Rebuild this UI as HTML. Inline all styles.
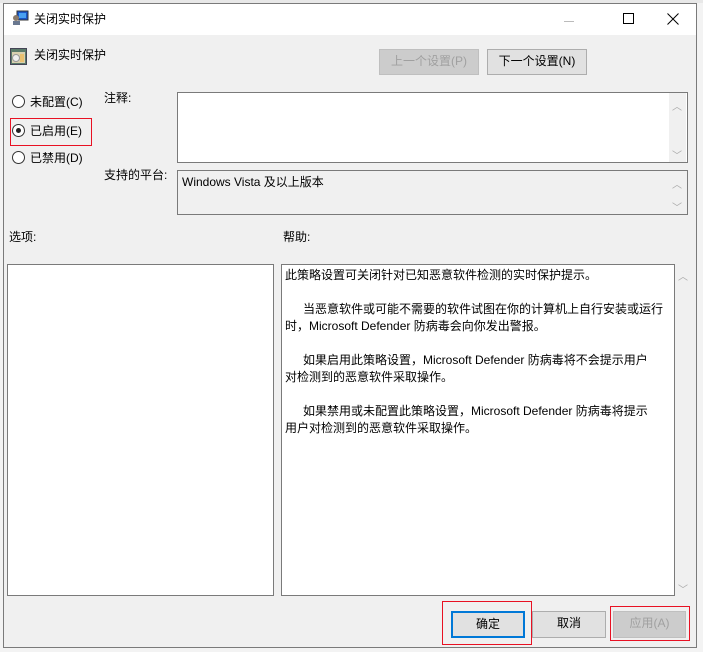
<!DOCTYPE html>
<html><head><meta charset="utf-8"><style>
*{margin:0;padding:0;box-sizing:border-box}
body{width:703px;height:652px;background:#f3f3f3;position:relative;overflow:hidden;font-family:"Liberation Sans","Microsoft YaHei","Noto Sans CJK SC",sans-serif;font-size:12px;color:#000}
.a{position:absolute}
#win{left:3px;top:3px;width:694px;height:645px;background:#f0f0f0;border:1px solid #7a7a7a}
#tb{left:0;top:0;width:692px;height:31px;background:#fff}
.t{position:absolute;white-space:nowrap;font-size:12px;line-height:14px}
.box{position:absolute;background:#fff;border:1px solid #7a7a7a}
.btn{position:absolute;border:1px solid #adadad;background:#e1e1e1;text-align:center;line-height:23px;font-size:12px}
.dis{background:#cccccc;border-color:#bfbfbf;color:#a0a0a0}
.rad{position:absolute;width:13px;height:13px;border:1px solid #333;border-radius:50%;background:#fff}
.red{position:absolute;border:1px solid #e81123}
.chev{position:absolute;color:#a8a8a8;font-size:10px}
</style></head><body>
<div class="a" style="left:0;top:0;width:703px;height:3px;background:#e8e8e8"></div>
<div id="win" class="a">
 <div id="tb" class="a"></div>
 <svg class="a" style="left:8px;top:6px" width="18" height="16" viewBox="0 0 18 16"><rect x="5" y="1" width="11" height="9" fill="#1a56c8" stroke="#333"/><rect x="7" y="3" width="7" height="5" fill="#49a0f0"/><circle cx="4" cy="8" r="3" fill="#8a7a6a"/><rect x="1" y="11" width="7" height="4" fill="#6a7890"/></svg>
 <div class="t" style="left:30px;top:8px">关闭实时保护</div>
 <div class="a" style="left:560px;top:17px;width:10px;height:1px;background:#bbb"></div>
 <div class="a" style="left:619px;top:9px;width:11px;height:11px;border:1px solid #000"></div>
 <svg class="a" style="left:663px;top:9px" width="12" height="12"><path d="M0.5 0.5L11.5 11.5M11.5 0.5L0.5 11.5" stroke="#000" stroke-width="1"/></svg>
 <svg class="a" style="left:6px;top:44px" width="17" height="17" viewBox="0 0 17 17"><rect x="0.5" y="0.5" width="16" height="16" fill="#5a7a6a" stroke="#445"/><rect x="2" y="4" width="13" height="11" fill="#d8d0b0"/><circle cx="6" cy="10" r="3.5" fill="#eee" stroke="#999"/><rect x="10" y="6" width="4" height="8" fill="#e8c070"/></svg>
 <div class="t" style="left:30px;top:44px">关闭实时保护</div>
 <div class="btn dis" style="left:375px;top:45px;width:100px;height:26px">上一个设置(P)</div>
 <div class="btn" style="left:483px;top:45px;width:100px;height:26px">下一个设置(N)</div>

 <div class="rad" style="left:8px;top:91px"></div><div class="t" style="left:26px;top:91px">未配置(C)</div>
 <div class="rad" style="left:8px;top:120px"></div><div class="a" style="left:12px;top:124px;width:5px;height:5px;border-radius:50%;background:#222"></div><div class="t" style="left:26px;top:120px">已启用(E)</div>
 <div class="red" style="left:6px;top:114px;width:82px;height:28px"></div>
 <div class="rad" style="left:8px;top:147px"></div><div class="t" style="left:26px;top:147px">已禁用(D)</div>

 <div class="t" style="left:100px;top:87px">注释:</div>
 <div class="box" style="left:173px;top:88px;width:511px;height:71px"></div>
 <div class="a" style="left:665px;top:89px;width:17px;height:69px;background:#f0f0f0"></div>
 <div class="chev" style="left:668px;top:94px">︿</div><div class="chev" style="left:668px;top:143px">﹀</div>
 <div class="t" style="left:100px;top:164px">支持的平台:</div>
 <div class="box" style="left:173px;top:166px;width:511px;height:45px;background:#f0f0f0"></div>
 <div class="t" style="left:178px;top:171px">Windows Vista 及以上版本</div>
 <div class="chev" style="left:668px;top:172px">︿</div><div class="chev" style="left:668px;top:195px">﹀</div>

 <div class="t" style="left:5px;top:226px">选项:</div>
 <div class="t" style="left:279px;top:226px">帮助:</div>
 <div class="box" style="left:3px;top:260px;width:267px;height:332px"></div>
 <div class="box" style="left:277px;top:260px;width:394px;height:332px"></div>
 <div class="chev" style="left:674px;top:264px">︿</div><div class="chev" style="left:674px;top:577px">﹀</div>
 <div class="a" style="left:281px;top:263px;width:388px;font-size:12px;line-height:17px;white-space:nowrap">
  此策略设置可关闭针对已知恶意软件检测的实时保护提示。<br><br>
  &emsp;&ensp;当恶意软件或可能不需要的软件试图在你的计算机上自行安装或运行<br>时，Microsoft Defender 防病毒会向你发出警报。<br><br>
  &emsp;&ensp;如果启用此策略设置，Microsoft Defender 防病毒将不会提示用户<br>对检测到的恶意软件采取操作。<br><br>
  &emsp;&ensp;如果禁用或未配置此策略设置，Microsoft Defender 防病毒将提示<br>用户对检测到的恶意软件采取操作。
 </div>

 <div class="red" style="left:438px;top:597px;width:90px;height:44px"></div>
 <div class="btn" style="left:447px;top:607px;width:74px;height:27px;border:2px solid #0078d7;line-height:23px">确定</div>
 <div class="btn" style="left:528px;top:607px;width:74px;height:27px">取消</div>
 <div class="red" style="left:606px;top:602px;width:80px;height:35px"></div>
 <div class="btn dis" style="left:609px;top:607px;width:73px;height:27px">应用(A)</div>
</div>
</body></html>
